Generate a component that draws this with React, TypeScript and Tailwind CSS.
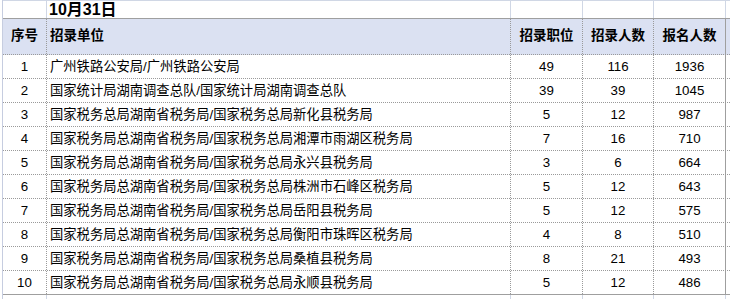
const rows = [
  { no: 1, unit: '广州铁路公安局/广州铁路公安局', posts: 49, hires: 116, applicants: 1936 },
  { no: 2, unit: '国家统计局湖南调查总队/国家统计局湖南调查总队', posts: 39, hires: 39, applicants: 1045 },
  { no: 3, unit: '国家税务总局湖南省税务局/国家税务总局新化县税务局', posts: 5, hires: 12, applicants: 987 },
  { no: 4, unit: '国家税务局总湖南省税务局/国家税务总局湘潭市雨湖区税务局', posts: 7, hires: 16, applicants: 710 },
  { no: 5, unit: '国家税务局总湖南省税务局/国家税务总局永兴县税务局', posts: 3, hires: 6, applicants: 664 },
  { no: 6, unit: '国家税务局总湖南省税务局/国家税务总局株洲市石峰区税务局', posts: 5, hires: 12, applicants: 643 },
  { no: 7, unit: '国家税务局总湖南省税务局/国家税务总局岳阳县税务局', posts: 5, hires: 12, applicants: 575 },
  { no: 8, unit: '国家税务局总湖南省税务局/国家税务总局衡阳市珠晖区税务局', posts: 4, hires: 8, applicants: 510 },
  { no: 9, unit: '国家税务局总湖南省税务局/国家税务总局桑植县税务局', posts: 8, hires: 21, applicants: 493 },
  { no: 10, unit: '国家税务局总湖南省税务局/国家税务总局永顺县税务局', posts: 5, hires: 12, applicants: 486 },
]

const cols = 'grid grid-cols-[44px_464px_72px_71px_72px]'
const cell = 'border-r border-dotted border-r-[#9a9a9a] flex items-center'

export default function App() {
  return (
    <div
      className="w-[730px] h-[299px] bg-white overflow-hidden text-black"
      style={{ fontFamily: '"Liberation Sans", "Noto Sans CJK SC", sans-serif' }}
    >
      <div className="ml-[2px] border-l border-l-[#c6cde0]">
        {/* date row */}
        <div className={`${cols} h-[19px] border-t border-t-[#d0d7e5] border-b border-b-[#9f9f9f]`}>
          <div className="border-r border-r-[#d0d7e5]" />
          <div className="border-r border-r-[#d0d7e5] flex items-end pl-[2px] text-[16px] font-bold leading-[17px]">
            10月31日
          </div>
          <div className="border-r border-r-[#d0d7e5]" />
          <div className="border-r border-r-[#d0d7e5]" />
          <div className="border-r border-r-[#d0d7e5]" />
        </div>

        {/* header */}
        <div className={`${cols} h-[36px] bg-[#dbe1f2] border-b border-dotted border-b-[#9a9a9a] text-[13.5px] font-bold`}>
          <div className={`${cell} justify-center`}>序号</div>
          <div className={`${cell} pl-[3px]`}>招录单位</div>
          <div className={`${cell} justify-center`}>招录职位</div>
          <div className={`${cell} justify-center`}>招录人数</div>
          <div className="border-r border-r-[#9f9f9f] flex items-center justify-center">报名人数</div>
        </div>

        {rows.map((r, i) => (
          <div
            key={r.no}
            className={`${cols} h-[24px] text-[13.3px] border-b ${
              i === rows.length - 1 ? 'border-solid border-b-[#9f9f9f]' : 'border-dotted border-b-[#9a9a9a]'
            }`}
          >
            <div className={`${cell} justify-center`}>{r.no}</div>
            <div className={`${cell} pl-[3px] whitespace-nowrap`}>{r.unit}</div>
            <div className={`${cell} justify-center`}>{r.posts}</div>
            <div className={`${cell} justify-center`}>{r.hires}</div>
            <div className="border-r border-r-[#9f9f9f] flex items-center justify-center">{r.applicants}</div>
          </div>
        ))}

        {/* empty row below */}
        <div className={`${cols} h-[20px]`}>
          <div className="border-r border-r-[#d0d7e5]" />
          <div className="border-r border-r-[#d0d7e5]" />
          <div className="border-r border-r-[#d0d7e5]" />
          <div className="border-r border-r-[#d0d7e5]" />
          <div className="border-r border-r-[#d0d7e5]" />
        </div>
      </div>
    </div>
  )
}
